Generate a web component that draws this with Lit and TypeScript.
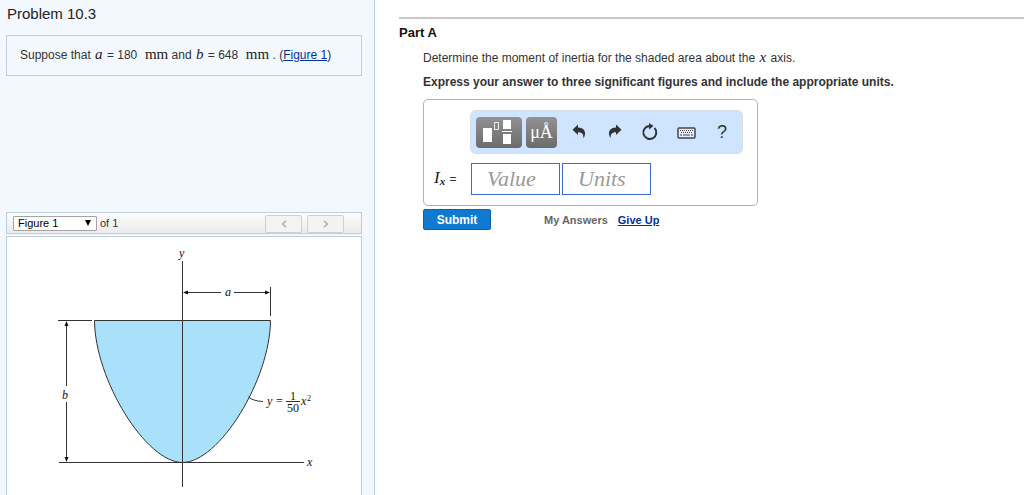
import { LitElement, html, css } from "lit";
import { customElement } from "lit/decorators.js";

@customElement("problem-figure")
class ProblemFigure extends LitElement {
  static styles = css`
    :host { display: block; }
    .drawing { display: block; width: 353px; height: 258px; }
    .line { stroke: #333; stroke-width: 1; fill: none; }
    .curve { stroke: #333; stroke-width: 1; fill: #a9e1fa; }
    .tip { fill: #111; }
    .label { font: italic 12px "Liberation Serif", "Times New Roman", serif; fill: #111; }
    .upright { font-style: normal; }
    .power { font-size: 8px; font-style: normal; }
  `;

  render() {
    return html`
      <svg class="drawing" viewBox="7 237 353 258" role="img" aria-label="Shaded area under a parabola">
        <path class="curve" d="M94.5 320.5H270.5C270 380 219 462.5 182.5 462.5S95 380 94.5 320.5Z" />
        <path class="line" d="M182.5 261V487M59 462.5H304M58 320.5H92M270.5 287V316" />
        <path class="line" d="M184 292.5H221M234 292.5H269M66.5 322V386M66.5 402V461" />
        <path class="tip" d="M183 292.5l5-2v4zM270 292.5l-5-2v4zM66.5 321l-2 5h4zM66.5 462l-2-5h4z" />
        <path class="line" d="M248.5 397Q253 401 263 401.5" />
        <text class="label" x="179" y="257">y</text>
        <text class="label" x="225" y="296">a</text>
        <text class="label" x="62" y="399">b</text>
        <text class="label" x="307" y="466">x</text>
        <text class="label" x="267" y="405">y</text>
        <text class="label upright" x="276" y="405">=</text>
        <text class="label upright" x="290" y="400">1</text>
        <text class="label upright" x="287" y="412">50</text>
        <path class="line" d="M286 401.5H300" />
        <text class="label" x="301" y="405">x</text>
        <text class="label power" x="307" y="401">2</text>
      </svg>
    `;
  }
}

@customElement("answer-toolbar")
class AnswerToolbar extends LitElement {
  static styles = css`
    :host { display: block; }
    .bar {
      display: flex; align-items: center; height: 44px; padding: 0 2px 0 5px; box-sizing: border-box;
      background: #cfe5ff; border: 1px solid #d6dde6; border-radius: 6px;
    }
    button { border: 0; padding: 0; margin: 0; background: none; color: #333; cursor: pointer; }
    svg { display: block; }
    .tile {
      height: 31px; border-radius: 4px; color: #fff; margin-right: 4px;
      background: linear-gradient(#929292, #6b6b6b);
    }
    .templates { width: 46px; }
    .symbols { width: 31px; font: 18px/31px "Liberation Serif", "Times New Roman", serif; }
    .tools { flex: 1; display: grid; grid-template-columns: repeat(5, 1fr); }
    .tool { height: 31px; display: flex; align-items: center; justify-content: center; }
    .help { font: 18px/31px "Liberation Sans", Arial, sans-serif; }
  `;

  render() {
    return html`
      <div class="bar" role="toolbar" aria-label="Answer tools">
        <button class="tile templates" aria-label="Templates">
          <svg width="46" height="31" viewBox="0 0 46 31">
            <path fill="#fff" d="M7 11h9v14H7zM27 3h8v9h-8zM27 17h8v10h-8zM26 14h10v1H26z" />
            <path fill="none" stroke="#eee" d="M18.5 5.5h4v7h-4z" />
          </svg>
        </button>
        <button class="tile symbols" aria-label="Symbols">μÅ</button>
        <div class="tools">
          <button class="tool" aria-label="Undo">
            <svg width="16" height="16" viewBox="0 0 16 16"><path fill="#333" d="M1.5 5.8L7 .5V3.5C12 3.5 14.5 6.5 14 10.5C13.8 12 13.2 13.2 12.4 14.2C12.6 10.5 11.5 8.2 7 8.2V11Z" /></svg>
          </button>
          <button class="tool" aria-label="Redo">
            <svg width="16" height="16" viewBox="0 0 16 16"><path fill="#333" d="M14.5 5.8L9 .5V3.5C4 3.5 1.5 6.5 2 10.5C2.2 12 2.8 13.2 3.6 14.2C3.4 10.5 4.5 8.2 9 8.2V11Z" /></svg>
          </button>
          <button class="tool" aria-label="Reset">
            <svg width="18" height="18" viewBox="0 0 18 18"><path fill="none" stroke="#333" stroke-width="2" d="M13.5 5A6.5 6.5 0 1 1 8.5 3" /><path fill="#333" d="M8 0L12.5 3L8 6.5Z" /></svg>
          </button>
          <button class="tool" aria-label="Keyboard">
            <svg width="19" height="15" viewBox="0 0 19 15">
              <rect x="1" y="3" width="17" height="10" rx="1" fill="#e4efff" stroke="#444" stroke-width="1.5" />
              <path stroke="#444" d="M3 5.5H16" stroke-dasharray="1 1" /><path stroke="#444" d="M4 7.5H16" stroke-dasharray="1 1" />
              <path stroke="#444" d="M3 10H5M6 10H13M14 10H16" />
            </svg>
          </button>
          <button class="tool help" aria-label="Help">?</button>
        </div>
      </div>
    `;
  }
}

@customElement("app-root")
class AppRoot extends LitElement {
  static styles = css`
    :host {
      display: grid; grid-template-columns: 375px minmax(0, 1fr); height: 100vh; overflow: hidden;
      font: 12px/16px "Liberation Sans", Arial, sans-serif; color: #333; background: #fff;
    }
    * { box-sizing: border-box; }
    a { color: #039; text-decoration: underline; }
    .side {
      display: flex; flex-direction: column; min-height: 0; padding: 4px 12px 0 6px;
      background: #f3f8ff; border-right: 1px solid #b9cfe4;
    }
    .title { margin: 0; padding-left: 1px; font-size: 15px; line-height: 20px; font-weight: 400; color: #222; }
    .intro { height: 41px; margin: 11px 0 136px; padding: 10px 13px; border: 1px solid #bccfe0; white-space: pre; }
    .var { margin: 0 1px; font: italic 15px/16px "Liberation Serif", "Times New Roman", serif; color: #222; }
    .unit { margin-left: 1px; font: 15px/16px "Liberation Serif", "Times New Roman", serif; color: #222; }
    .picker {
      display: flex; align-items: center; height: 22px; padding: 0 17px 0 6px; margin-bottom: 2px;
      border: 1px solid #bccfe0; background: linear-gradient(#fdfdfd, #ebebeb); font-size: 11px;
    }
    .choice { display: grid; align-items: center; width: 84px; margin-right: 3px; }
    .choice > * { grid-area: 1 / 1; }
    .select {
      appearance: none; height: 15px; width: 100%; padding: 0 4px; margin: 0; background: #fff; color: #000;
      border: 1px solid #a5a5a5; border-radius: 1px; font: 11px/13px "Liberation Sans", Arial, sans-serif;
    }
    .arrow { justify-self: end; margin-right: 6px; pointer-events: none; }
    .steps { display: flex; gap: 5px; margin-left: auto; align-self: end; }
    .step {
      display: flex; align-items: center; justify-content: center; width: 37px; height: 18px; padding: 0;
      border: 1px solid #d0d0d0; border-radius: 2px; background: #f3f3f3;
    }
    .figure { flex: 1; min-height: 0; overflow: hidden; background: #fff; border: 1px solid #bccfe0; border-bottom: 0; }
    .main { padding: 17px 0 0 24px; min-width: 0; }
    .part { margin: 0; padding-top: 5px; border-top: 2px solid #c8c8c8; font-size: 13px; line-height: 18px; font-weight: 700; color: #111; }
    .body { padding: 7px 0 0 24px; }
    .ask { margin: 0 0 8px; }
    .rule { margin: 0 0 9px; font-weight: 700; }
    .answer { width: 335px; padding: 10px 14px 10px 10px; border: 1px solid #b3b3b3; border-radius: 5px; }
    .tools { margin-left: 36px; }
    .entry { display: flex; align-items: center; gap: 2px; margin-top: 9px; }
    .name { width: 35px; white-space: nowrap; }
    .symbol { margin-right: 1px; font: italic 17px/20px "Liberation Serif", "Times New Roman", serif; color: #222; }
    .sub { font-size: 11px; font-weight: 700; vertical-align: -2px; }
    .field {
      width: 89px; height: 32px; padding: 0 15px; border: 1px solid #3c6cd3; border-radius: 0; outline: 0;
      background: #fff; font: italic 22px/28px "Liberation Serif", "Times New Roman", serif; color: #222;
    }
    .field::placeholder { color: #999; opacity: 1; }
    .actions { display: flex; align-items: center; margin-top: 3px; font-size: 11px; font-weight: 700; color: #666; }
    .submit {
      width: 68px; height: 21px; padding: 0; margin-right: 53px; color: #fff; background: #0f7ad0;
      border: 1px solid #0b62a9; border-radius: 2px; font: 700 12px/18px "Liberation Sans", Arial, sans-serif;
    }
    .give { margin-left: 10px; }
  `;

  render() {
    return html`
      <aside class="side">
        <h1 class="title">Problem 10.3</h1>
        <div class="intro">Suppose that <span class="var">a</span> = 180  <span class="unit">mm</span> and <span class="var">b</span> = 648  <span class="unit">mm</span> . (<a href="#figure">Figure 1</a>)</div>
        <div class="picker">
          <div class="choice">
            <select class="select" id="pick" aria-label="Figure"><option>Figure 1</option></select>
            <svg class="arrow" width="6" height="6" viewBox="0 0 6 6"><path d="M0 0H6L3 6Z" /></svg>
          </div>
          <label for="pick">of 1</label>
          <div class="steps">
            <button class="step" aria-label="Previous figure">
              <svg width="6" height="8" viewBox="0 0 6 8"><path d="M5 1L1.5 4L5 7" fill="none" stroke="#aaa" stroke-width="1.5" /></svg>
            </button>
            <button class="step" aria-label="Next figure">
              <svg width="6" height="8" viewBox="0 0 6 8"><path d="M1 1L4.5 4L1 7" fill="none" stroke="#aaa" stroke-width="1.5" /></svg>
            </button>
          </div>
        </div>
        <div class="figure" id="figure"><problem-figure></problem-figure></div>
      </aside>
      <main class="main">
        <h2 class="part">Part A</h2>
        <div class="body">
          <p class="ask">Determine the moment of inertia for the shaded area about the <span class="var">x</span> axis.</p>
          <p class="rule">Express your answer to three significant figures and include the appropriate units.</p>
          <div class="answer">
            <answer-toolbar class="tools"></answer-toolbar>
            <div class="entry">
              <label class="name" for="value"><span class="symbol">I<span class="sub">x</span></span> =</label>
              <input class="field" id="value" type="text" placeholder="Value" />
              <input class="field" type="text" placeholder="Units" aria-label="Units" />
            </div>
          </div>
          <div class="actions">
            <button class="submit">Submit</button>
            <span>My Answers</span>
            <a class="give" href="#give-up">Give Up</a>
          </div>
        </div>
      </main>
    `;
  }
}
